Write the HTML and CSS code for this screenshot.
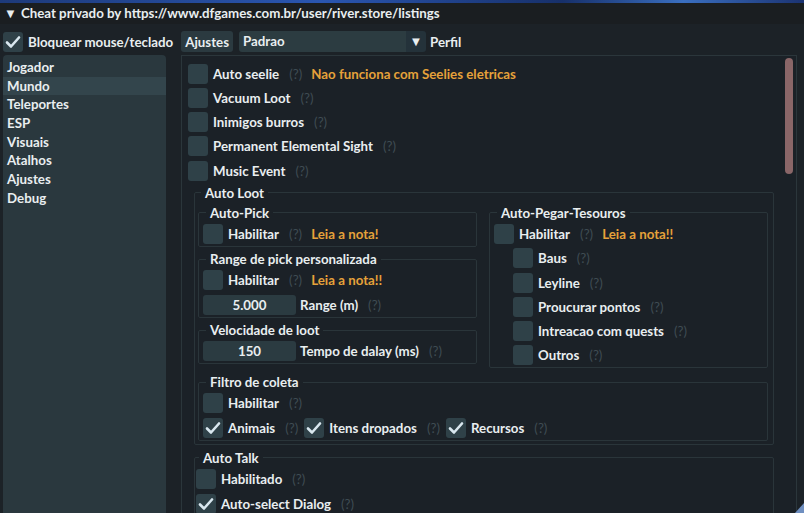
FILE: index.html
```html
<!DOCTYPE html>
<html lang="pt-BR">
<head>
    <meta charset="UTF-8">
    <meta name="viewport" content="width=device-width, initial-scale=1.0">
    <title>Cheat privado</title>
    <link rel="stylesheet" href="styles.css">
</head>
<body>
    <div class="backdrop"></div>

    <div class="window">
        <div class="titlebar"><span class="tri">&#9660;</span>Cheat privado by https://www.dfgames.com.br/user/river.store/listings</div>

        <div class="menu-row">
            <div class="row">
                <span class="box checked"><svg viewBox="0 0 20 20"><polyline points="4,10.5 8,14.5 16,5.5"/></svg></span>
                <span class="text">Bloquear mouse/teclado</span>
            </div>
            <button class="btn">Ajustes</button>
            <div class="combo">
                <span class="combo-value">Padrao</span>
                <span class="combo-arrow">&#9660;</span>
            </div>
            <span class="text perfil">Perfil</span>
        </div>

        <div class="main">
            <ul class="sidebar">
                <li>Jogador</li>
                <li class="active">Mundo</li>
                <li>Teleportes</li>
                <li>ESP</li>
                <li>Visuais</li>
                <li>Atalhos</li>
                <li>Ajustes</li>
                <li>Debug</li>
            </ul>

            <div class="content">
                <div class="scroll-area">
                    <div class="row">
                        <span class="box"></span><span class="text">Auto seelie</span><span class="help">(?)</span><span class="note">Nao funciona com Seelies eletricas</span>
                    </div>
                    <div class="row">
                        <span class="box"></span><span class="text">Vacuum Loot</span><span class="help">(?)</span>
                    </div>
                    <div class="row">
                        <span class="box"></span><span class="text">Inimigos burros</span><span class="help">(?)</span>
                    </div>
                    <div class="row">
                        <span class="box"></span><span class="text">Permanent Elemental Sight</span><span class="help">(?)</span>
                    </div>
                    <div class="row">
                        <span class="box"></span><span class="text">Music Event</span><span class="help">(?)</span>
                    </div>

                    <fieldset class="group outer loot">
                        <legend>Auto Loot</legend>
                        <div class="columns">
                            <div class="col">
                                <fieldset class="group">
                                    <legend>Auto-Pick</legend>
                                    <div class="row">
                                        <span class="box"></span><span class="text">Habilitar</span><span class="help">(?)</span><span class="note">Leia a nota!</span>
                                    </div>
                                </fieldset>
                                <fieldset class="group">
                                    <legend>Range de pick personalizada</legend>
                                    <div class="row">
                                        <span class="box"></span><span class="text">Habilitar</span><span class="help">(?)</span><span class="note">Leia a nota!!</span>
                                    </div>
                                    <div class="row">
                                        <span class="input">5.000</span><span class="text">Range (m)</span><span class="help">(?)</span>
                                    </div>
                                </fieldset>
                                <fieldset class="group">
                                    <legend>Velocidade de loot</legend>
                                    <div class="row">
                                        <span class="input">150</span><span class="text">Tempo de dalay (ms)</span><span class="help">(?)</span>
                                    </div>
                                </fieldset>
                            </div>
                            <div class="col">
                                <fieldset class="group tall">
                                    <legend>Auto-Pegar-Tesouros</legend>
                                    <div class="row">
                                        <span class="box"></span><span class="text">Habilitar</span><span class="help">(?)</span><span class="note">Leia a nota!!</span>
                                    </div>
                                    <div class="row sub">
                                        <span class="box"></span><span class="text">Baus</span><span class="help">(?)</span>
                                    </div>
                                    <div class="row sub">
                                        <span class="box"></span><span class="text">Leyline</span><span class="help">(?)</span>
                                    </div>
                                    <div class="row sub">
                                        <span class="box"></span><span class="text">Proucurar pontos</span><span class="help">(?)</span>
                                    </div>
                                    <div class="row sub">
                                        <span class="box"></span><span class="text">Intreacao com quests</span><span class="help">(?)</span>
                                    </div>
                                    <div class="row sub">
                                        <span class="box"></span><span class="text">Outros</span><span class="help">(?)</span>
                                    </div>
                                </fieldset>
                            </div>
                        </div>

                        <fieldset class="group filter">
                            <legend>Filtro de coleta</legend>
                            <div class="row">
                                <span class="box"></span><span class="text">Habilitar</span><span class="help">(?)</span>
                            </div>
                            <div class="row">
                                <span class="box checked"><svg viewBox="0 0 20 20"><polyline points="4,10.5 8,14.5 16,5.5"/></svg></span><span class="text">Animais</span><span class="help">(?)</span>
                                <span class="box checked"><svg viewBox="0 0 20 20"><polyline points="4,10.5 8,14.5 16,5.5"/></svg></span><span class="text">Itens dropados</span><span class="help">(?)</span>
                                <span class="box checked"><svg viewBox="0 0 20 20"><polyline points="4,10.5 8,14.5 16,5.5"/></svg></span><span class="text">Recursos</span><span class="help">(?)</span>
                            </div>
                        </fieldset>
                    </fieldset>

                    <fieldset class="group outer talk">
                        <legend>Auto Talk</legend>
                        <div class="row">
                            <span class="box"></span><span class="text">Habilitado</span><span class="help">(?)</span>
                        </div>
                        <div class="row">
                            <span class="box checked"><svg viewBox="0 0 20 20"><polyline points="4,10.5 8,14.5 16,5.5"/></svg></span><span class="text">Auto-select Dialog</span><span class="help">(?)</span>
                        </div>
                    </fieldset>
                </div>

                <div class="scrollbar"><div class="thumb"></div></div>
            </div>
        </div>

        <div class="grip"></div>
    </div>
</body>
</html>
```

FILE: styles.css
```css
/* General Styles */
* {
    margin: 0;
    padding: 0;
    box-sizing: border-box;
}

html, body {
    width: 804px;
    height: 513px;
    overflow: hidden;
}

body {
    background: #1c2227;
    color: #e9eef0;
    font-family: 'Lato', 'Noto Sans', sans-serif;
    font-weight: 700;
    font-size: 13.3px;
    line-height: 16px;
}

/* Game behind the window */
.backdrop {
    height: 3px;
    background: linear-gradient(to right, #1d3a7a, #2a56b0 40%, #17306a 70%, #3a6fc0 85%, #1b3372);
}

.window {
    position: relative;
    height: 510px;
    display: flex;
    flex-direction: column;
    background: #1c2227;
}

/* Title bar */
.titlebar {
    height: 21px;
    line-height: 21px;
    padding-left: 4px;
    background: #1a1e21;
    white-space: nowrap;
}

.tri {
    font-size: 13px;
    margin-right: 4px;
}

/* Top row */
.menu-row {
    display: flex;
    align-items: center;
    gap: 8px;
    height: 31px;
    padding: 4px 3px 0 3px;
}

.btn {
    font: inherit;
    color: inherit;
    border: none;
    background: #2b3a40;
    border-radius: 3px;
    height: 21px;
    padding: 0 4px;
}

.combo {
    display: flex;
    height: 21px;
    margin-left: -2px;
}

.combo-value {
    width: 167px;
    background: #2c3c41;
    padding-left: 4px;
    line-height: 21px;
    border-radius: 3px 0 0 3px;
}

.combo-arrow {
    width: 20px;
    background: #24323a;
    text-align: center;
    font-size: 13px;
    line-height: 21px;
    border-radius: 0 3px 3px 0;
}

.perfil {
    margin-left: -4px;
}

/* Main area */
.main {
    flex: 1;
    display: flex;
    gap: 15px;
    padding-left: 3px;
    padding-right: 7px;
    min-height: 0;
}

.sidebar {
    list-style: none;
    width: 163px;
    background: #2a383e;
    border-radius: 4px 4px 0 0;
    padding-top: 3px;
}

.sidebar li {
    height: 18.7px;
    line-height: 18.7px;
    padding-left: 4px;
}

.sidebar li.active {
    background: #33454c;
}

.content {
    flex: 1;
    display: flex;
    background: #1b2127;
    border: 1px solid #2b363b;
    border-bottom: none;
    min-height: 0;
    overflow: hidden;
}

.scroll-area {
    flex: 1;
    display: flex;
    flex-direction: column;
    gap: 4.3px;
    padding: 7.5px 11px 0 6px;
    min-width: 0;
}

.scrollbar {
    width: 11px;
    padding: 2px 3px 0 0;
}

.thumb {
    height: 116px;
    background: #8a6668;
    border-radius: 4px;
}

/* Widgets */
.row {
    display: flex;
    align-items: center;
    height: 20px;
    flex-shrink: 0;
    white-space: nowrap;
}

.row.sub {
    padding-left: 19px;
}

.box {
    width: 20px;
    height: 20px;
    border-radius: 3px;
    background: #2f4148;
    flex-shrink: 0;
}

.box svg {
    width: 20px;
    height: 20px;
    display: block;
    fill: none;
    stroke: #d9e7ef;
    stroke-width: 2.6;
    stroke-linecap: round;
    stroke-linejoin: round;
}

.box + .text {
    margin-left: 5px;
}

.help {
    color: #3f4c53;
    font-weight: 400;
    margin-left: 10px;
    margin-right: 6px;
}

.note {
    color: #e6a23a;
    margin-left: 3px;
}

.input {
    width: 93px;
    height: 20px;
    line-height: 20px;
    background: #2b3b41;
    border-radius: 3px;
    text-align: center;
    margin-right: 4px;
}

/* Group boxes */
.group {
    border: 1px solid #2a353a;
    border-radius: 2px;
    padding: 3px 4px 2px 4px;
    min-width: 0;
    display: flex;
    flex-direction: column;
    gap: 4.3px;
}

.group legend {
    padding: 0 4px;
    margin-left: 3px;
    line-height: 16px;
}

.outer {
    margin-left: 6px;
    flex-shrink: 0;
}

.loot {
    padding: 4px 5px 3px 3px;
    gap: 6px;
}

.talk {
    padding: 3px 0 0 1px;
    gap: 5px;
}

.columns {
    display: flex;
    gap: 12px;
}

.col {
    flex: 1;
    display: flex;
    flex-direction: column;
    gap: 4.5px;
}

.tall {
    flex: 1;
}

.filter {
    gap: 5px;
}

/* Resize grip */
.grip {
    position: absolute;
    right: 0;
    bottom: 0;
    width: 0;
    height: 0;
    border-left: 9px solid transparent;
    border-bottom: 10px solid #6f8fc0;
}
```
